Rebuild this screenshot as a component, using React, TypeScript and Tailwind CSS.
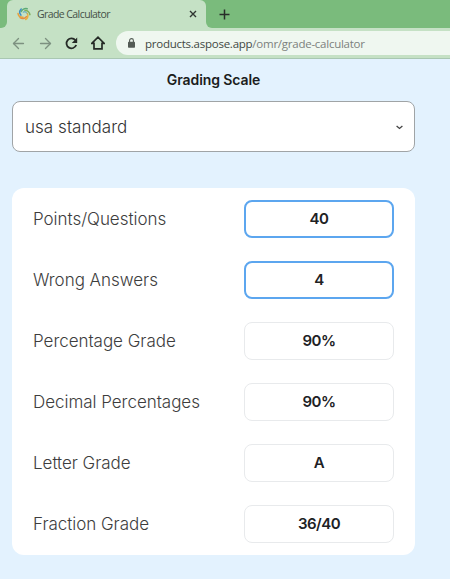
import { ArrowLeft, ArrowRight } from "lucide-react";

type GradeField = {
  label: string;
  value: string;
  editable?: boolean;
};

const fields: GradeField[] = [
  { label: "Points/Questions", value: "40", editable: true },
  { label: "Wrong Answers", value: "4", editable: true },
  { label: "Percentage Grade", value: "90%" },
  { label: "Decimal Percentages", value: "90%" },
  { label: "Letter Grade", value: "A" },
  { label: "Fraction Grade", value: "36/40" }
];

export default function App() {
  return (
    <div className="flex h-[579px] w-[450px] flex-col overflow-hidden bg-[#e3f2fe]">
      <TabStrip />
      <Toolbar />
      <main className="w-[427px] pl-3 pr-3">
        <h1 className="mt-[11px] text-center font-['Inter',sans-serif] text-[14px] font-semibold leading-5 tracking-[-0.1px] text-[#1b1d20]">
          Grading Scale
        </h1>
        <button
          type="button"
          className="mt-[11px] flex h-[51px] w-[403px] items-center justify-between rounded-lg border border-[#a0a4a6] bg-white pl-3 pr-[11px] pt-0.5 font-['Inter',sans-serif] text-[17px] font-light tracking-[0.04px] text-[#333]"
        >
          <span>usa standard</span>
          <svg width="7" height="5" viewBox="0 0 7 5" fill="none" stroke="#444" strokeWidth="1.3">
            <path d="M.6.9 3.5 3.4 6.4.9" />
          </svg>
        </button>
        <section className="mt-9 flex w-[403px] flex-col gap-[23px] rounded-xl bg-white py-3 pl-[21px] pr-[21px]">
          {fields.map((field) => (
            <FieldRow key={field.label} field={field} />
          ))}
        </section>
      </main>
    </div>
  );
}

function TabStrip() {
  return (
    <div className="flex h-7 shrink-0 bg-[#c5e1c5] font-['Open_Sans',sans-serif]">
      <div className="w-[7px] rounded-br-md bg-[#7abb7c]" />
      <div className="flex flex-1 bg-[linear-gradient(#7abb7c_50%,#c5e1c5_50%)]">
        <div className="flex w-[199px] items-center rounded-t-md bg-[#c5e1c5] pl-[10px] pr-[9px]">
          <AsposeLogo />
          <span className="ml-[6px] flex-1 whitespace-nowrap text-[10.5px] leading-4 tracking-[-0.58px] text-[#465148]">
            Grade Calculator
          </span>
          <svg width="8" height="8" viewBox="0 0 8 8" stroke="#303532" strokeWidth="1.4">
            <path d="m1 1 6 6M7 1 1 7" />
          </svg>
        </div>
        <div className="flex flex-1 items-center rounded-bl-md bg-[#7abb7c] pl-[13px]">
          <svg width="11" height="11" viewBox="0 0 11 11" stroke="#282d29" strokeWidth="1.5">
            <path d="M5.5.5v10M.5 5.5h10" />
          </svg>
        </div>
      </div>
    </div>
  );
}

function Toolbar() {
  return (
    <div className="flex h-[31px] shrink-0 items-center border-b border-[#a9c7b2] bg-[#c5e1c5] pl-[10px]">
      <ArrowLeft size={17} strokeWidth={1.9} color="#7d9180" />
      <ArrowRight size={17} strokeWidth={1.9} color="#7d9180" className="ml-[10px]" />
      <svg className="ml-[11px]" width="13" height="13" viewBox="0 0 13 13" fill="none">
        <path d="M10.4 3.2A5 5 0 1 0 11.2 8" stroke="#252a26" strokeWidth="1.8" />
        <path d="M12.2.5v5.4H6.8Z" fill="#252a26" />
      </svg>
      <svg className="ml-[13px]" width="14" height="14" viewBox="0 0 14 14" fill="none" stroke="#252a26" strokeWidth="1.7">
        <path d="M.8 7.3 7 1.2l6.2 6.1H11v5.6H3V7.3Z" />
      </svg>
      <div className="ml-[11px] flex h-6 flex-1 items-center rounded-l-full bg-[#eff7f0] pl-3">
        <svg width="7" height="10" viewBox="0 0 7 10" fill="none">
          <path d="M1.6 4V2.5a1.9 1.9 0 0 1 3.8 0V4" stroke="#535b55" strokeWidth="1.1" />
          <rect y="3.7" width="7" height="6" rx=".7" fill="#535b55" />
        </svg>
        <span className="ml-[10px] whitespace-nowrap pt-px font-['Open_Sans',sans-serif] text-[11.5px] leading-4 tracking-[-0.25px] text-[#7c817d]">
          <span className="text-[#414843]">products.aspose.app</span>/omr/grade-calculator
        </span>
      </div>
    </div>
  );
}

function AsposeLogo() {
  return (
    <svg width="14" height="14" viewBox="0 0 14 14" fill="none" strokeWidth="1.5" strokeLinecap="round">
      <path d="M4.2 4.6C5 2.4 7.6 1 10.2 1.7" stroke="#5cab76" />
      <path d="M8 3.5c2.4-.3 4.6 1.5 4.9 4.2" stroke="#7fae5a" />
      <path d="M10.2 6.3c1.4 2.1.7 4.9-1.6 6.2" stroke="#e9b13c" />
      <path d="M9.4 9.6c-1.4 2-4.3 2.6-6.3 1.1" stroke="#e58b42" />
      <path d="M6 10.3C3.6 10.5 1.4 8.9 1 6.4" stroke="#e9a13c" />
      <path d="M3.9 8.1C2.4 6.3 2.4 3.8 4.2 2" stroke="#3c8fc5" />
      <path d="M6.2 5.1c1.3-.8 3-.3 3.7 1.1" stroke="#4a9fc0" strokeWidth="1" />
    </svg>
  );
}

function FieldRow({ field }: { field: GradeField }) {
  return (
    <div className="flex h-[38px] items-center justify-between font-['Inter',sans-serif]">
      <span className="pt-0.5 text-[17px] font-light tracking-[-0.03px] text-[#3d3d3d]">{field.label}</span>
      <div
        className={`flex h-[38px] w-[150px] items-center justify-center rounded-lg text-[15px] font-semibold tracking-[-0.5px] text-[#202124] ${
          field.editable ? "border-2 border-[#5ca6ef]" : "border border-[#e8eaec] pt-px"
        }`}
      >
        {field.value}
      </div>
    </div>
  );
}
